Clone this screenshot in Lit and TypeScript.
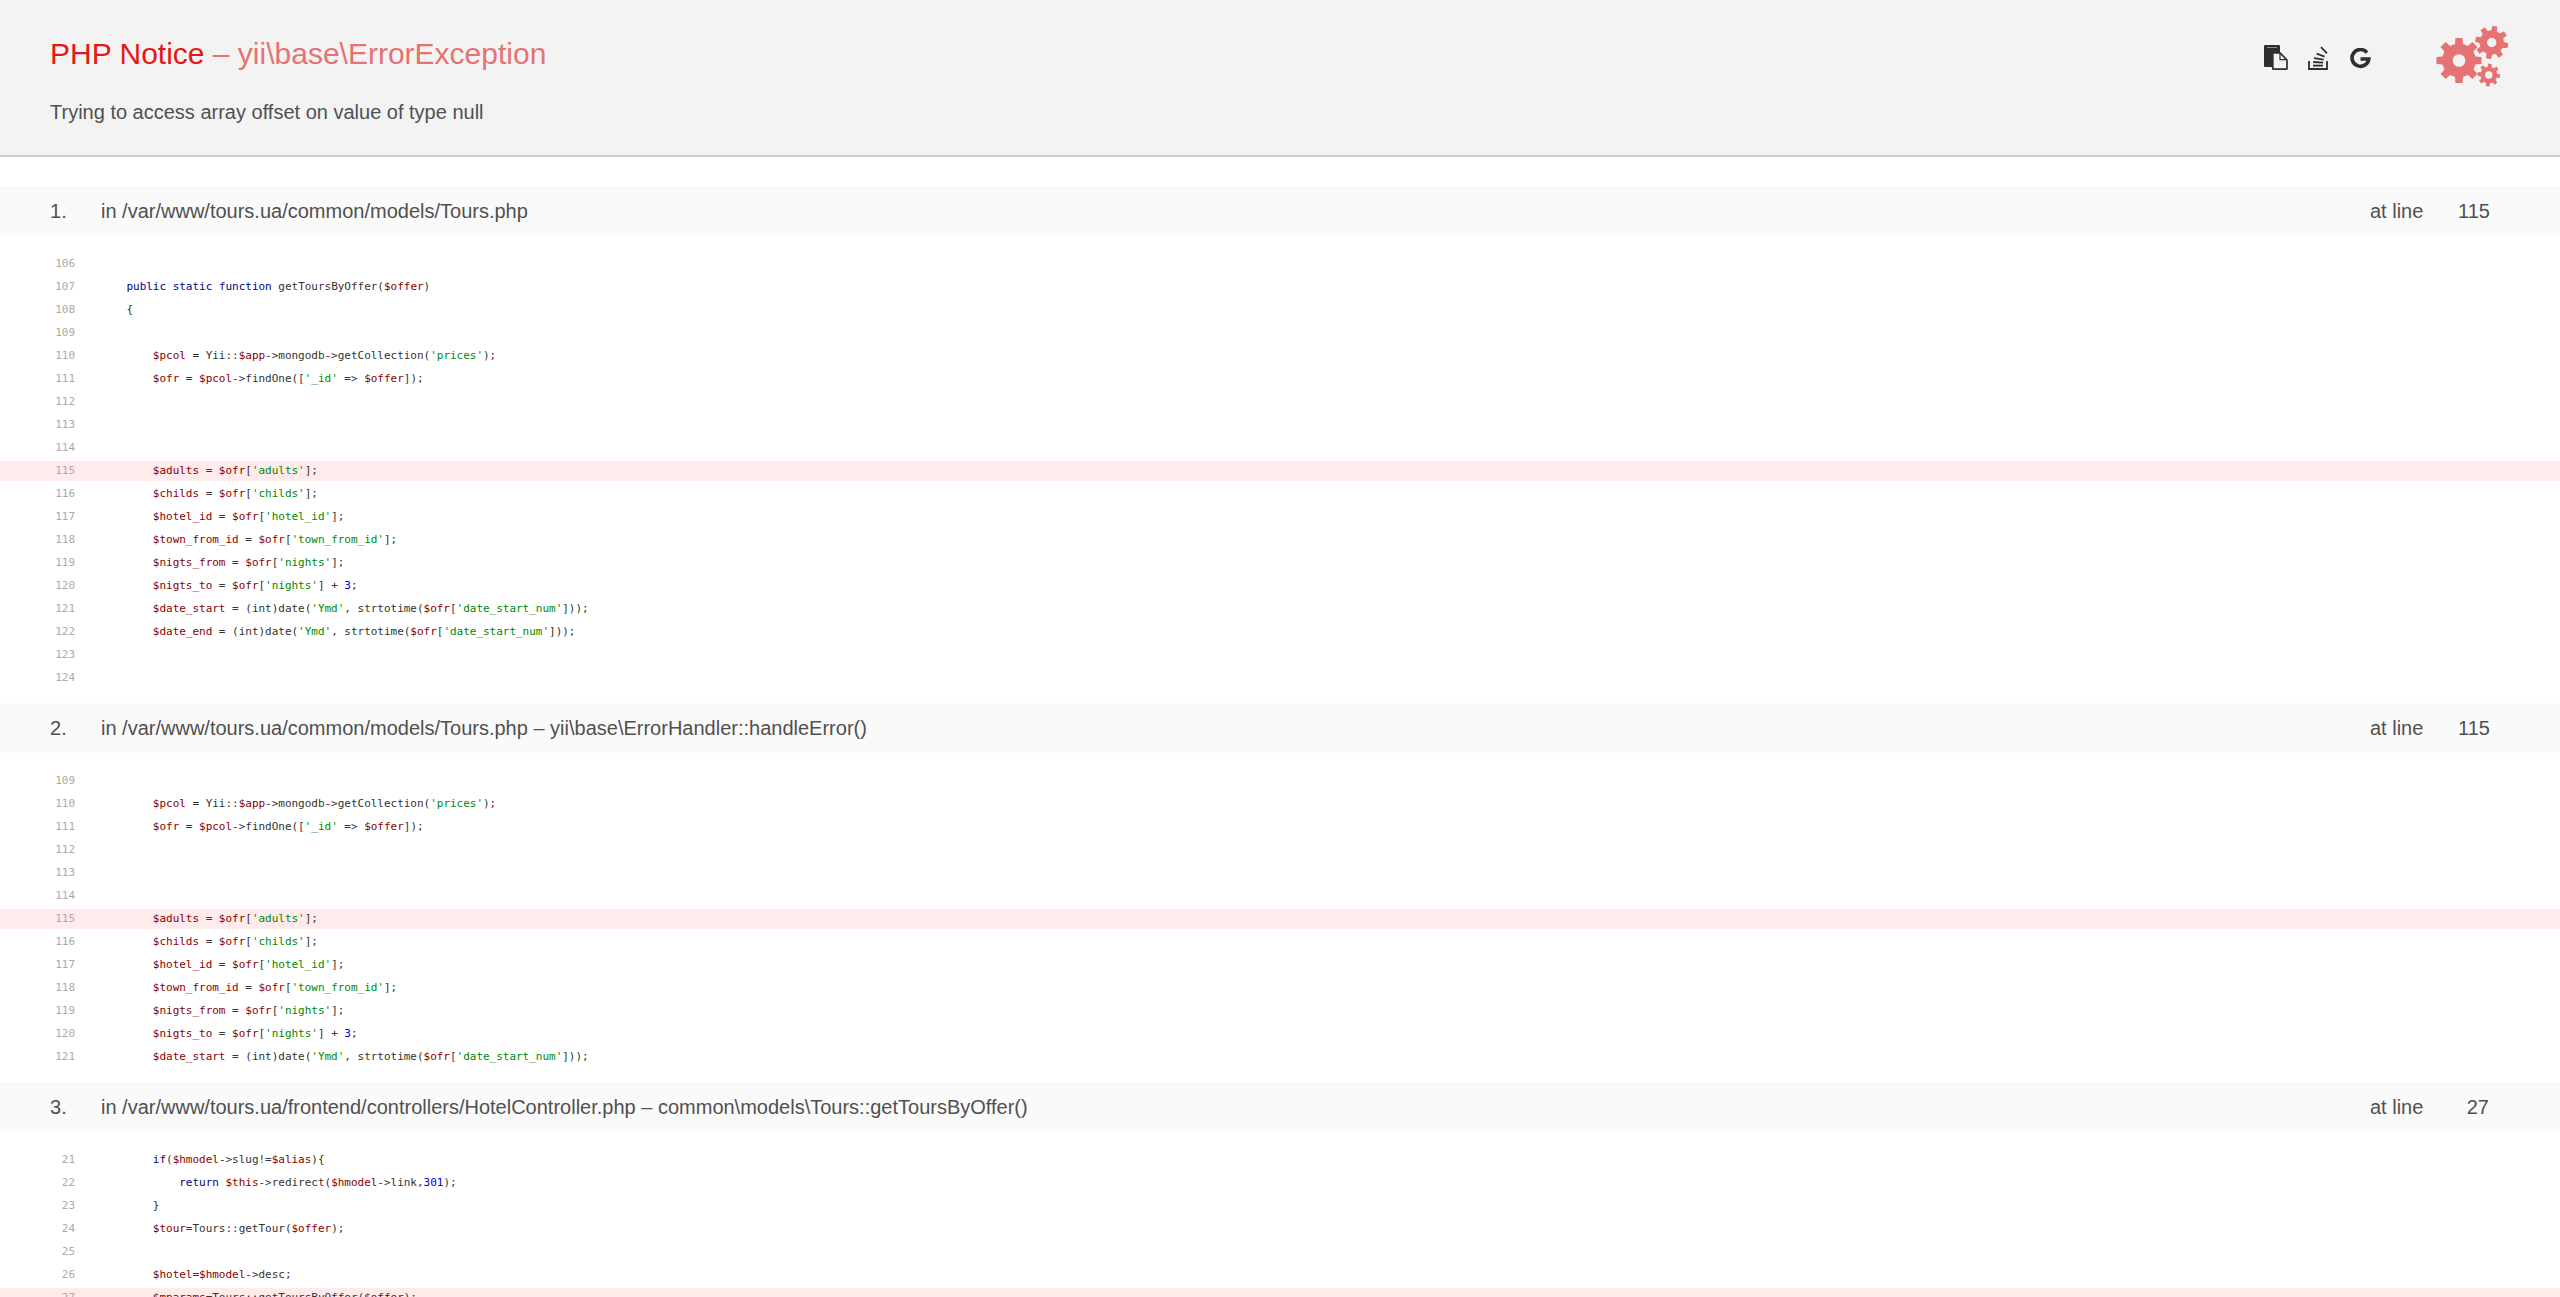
import { LitElement, html, css, svg } from "lit";
import { customElement } from "lit/decorators.js";

type Line = [number, string];
interface Section {
  n: number;
  title: string;
  at: number;
  hl: number;
  lines: Line[];
}

const tail1: Line[] = [
  [110, "        $pcol = Yii::$app->mongodb->getCollection('prices');"],
  [111, "        $ofr = $pcol->findOne(['_id' => $offer]);"],
  [112, ""],
  [113, ""],
  [114, ""],
  [115, "        $adults = $ofr['adults'];"],
  [116, "        $childs = $ofr['childs'];"],
  [117, "        $hotel_id = $ofr['hotel_id'];"],
  [118, "        $town_from_id = $ofr['town_from_id'];"],
  [119, "        $nigts_from = $ofr['nights'];"],
  [120, "        $nigts_to = $ofr['nights'] + 3;"],
  [121, "        $date_start = (int)date('Ymd', strtotime($ofr['date_start_num']));"],
];

const sections: Section[] = [
  {
    n: 1,
    title: "in /var/www/tours.ua/common/models/Tours.php",
    at: 115,
    hl: 115,
    lines: [
      [106, ""],
      [107, "    public static function getToursByOffer($offer)"],
      [108, "    {"],
      [109, ""],
      ...tail1,
      [122, "        $date_end = (int)date('Ymd', strtotime($ofr['date_start_num']));"],
      [123, ""],
      [124, ""],
    ],
  },
  {
    n: 2,
    title: "in /var/www/tours.ua/common/models/Tours.php – yii\\base\\ErrorHandler::handleError()",
    at: 115,
    hl: 115,
    lines: [[109, ""], ...tail1],
  },
  {
    n: 3,
    title: "in /var/www/tours.ua/frontend/controllers/HotelController.php – common\\models\\Tours::getToursByOffer()",
    at: 27,
    hl: 27,
    lines: [
      [21, "        if($hmodel->slug!=$alias){"],
      [22, "            return $this->redirect($hmodel->link,301);"],
      [23, "        }"],
      [24, "        $tour=Tours::getTour($offer);"],
      [25, ""],
      [26, "        $hotel=$hmodel->desc;"],
      [27, "        $mparams=Tours::getToursByOffer($offer);"],
    ],
  },
];

const TOKEN = /('[^']*')|(\$[A-Za-z_]\w*)|\b(public|static|function|if|return)\b|\b(\d+)\b/g;

function highlight(src: string) {
  const out: unknown[] = [];
  let last = 0;
  for (const m of src.matchAll(TOKEN)) {
    const i = m.index ?? 0;
    if (i > last) out.push(src.slice(last, i));
    const cls = m[1] ? "str" : m[2] ? "var" : m[3] ? "kw" : "lit";
    out.push(html`<span class=${cls}>${m[0]}</span>`);
    last = i + m[0].length;
  }
  if (last < src.length) out.push(src.slice(last));
  return out;
}

function gearPath(cx: number, cy: number, outer: number, inner: number, hole: number, teeth: number, start: number) {
  const step = (Math.PI * 2) / teeth;
  const pts: string[] = [];
  for (let t = 0; t < teeth; t++) {
    const a = start + t * step;
    const corners: [number, number][] = [
      [inner, a - step * 0.3],
      [outer, a - step * 0.2],
      [outer, a + step * 0.2],
      [inner, a + step * 0.3],
    ];
    for (const [r, ang] of corners) {
      pts.push(`${(cx + r * Math.cos(ang)).toFixed(2)} ${(cy + r * Math.sin(ang)).toFixed(2)}`);
    }
  }
  const h = `M${cx - hole} ${cy}a${hole} ${hole} 0 1 0 ${hole * 2} 0a${hole} ${hole} 0 1 0 ${-hole * 2} 0z`;
  return `M${pts.join("L")}z${h}`;
}

@customElement("app-root")
export class AppRoot extends LitElement {
  static styles = css`
    :host {
      display: block;
      height: 1297px;
      overflow: hidden;
      background: #fff;
      font-family: "Liberation Sans", Arial, sans-serif;
    }
    .header {
      height: 155px;
      background: #f3f3f3;
      border-bottom: 2px solid #ccc;
      display: flex;
      justify-content: space-between;
      padding: 0 50px;
    }
    h1 {
      margin: 36px 0 0;
      font-size: 30px;
      line-height: 36px;
      font-weight: normal;
      color: #e57373;
    }
    h1 span {
      color: #e51717;
    }
    h2 {
      margin: 28px 0 0;
      font-size: 20px;
      line-height: 24px;
      font-weight: normal;
      color: #505050;
    }
    .tools {
      display: flex;
      align-items: flex-start;
    }
    .copy {
      width: 24px;
      height: 25px;
      margin-top: 45px;
    }
    .so {
      width: 20px;
      height: 24px;
      margin: 46px 0 0 20px;
    }
    .g {
      width: 21px;
      height: 21px;
      margin: 48px 0 0 22px;
    }
    .gears {
      width: 76px;
      height: 64px;
      margin: 25px 0 0 63px;
    }
    .sections {
      padding-top: 29px;
    }
    .bar {
      height: 50px;
      background: #fafafa;
      display: flex;
      align-items: center;
      padding: 0 71px 0 50px;
      font-size: 20px;
      color: #505050;
    }
    .num {
      width: 51px;
      flex: none;
    }
    .title {
      flex: 1;
    }
    .at-line {
      width: 88px;
      flex: none;
    }
    .line-no {
      width: 31px;
      flex: none;
      text-align: right;
      white-space: nowrap;
    }
    .code {
      padding: 18px 0 12px;
      font-family: "DejaVu Sans Mono", monospace;
      font-size: 11px;
      letter-spacing: -0.02px;
      color: #333;
    }
    .row {
      display: flex;
      height: 20px;
      line-height: 20px;
      margin-bottom: 3px;
      white-space: pre;
    }
    .row.hl {
      background: #ffebeb;
    }
    .ln {
      width: 75px;
      flex: none;
      text-align: right;
      color: #aaa;
    }
    .src {
      margin-left: 25px;
    }
    .kw {
      color: #000080;
    }
    .var {
      color: #880000;
    }
    .str {
      color: #008800;
    }
    .lit {
      color: #0000dd;
    }
  `;

  render() {
    return html`
      <div class="header">
        <div>
          <h1><span>PHP Notice</span> – yii\\base\\ErrorException</h1>
          <h2>Trying to access array offset on value of type null</h2>
        </div>
        <div class="tools">
          <svg class="copy" viewBox="0 0 24 25">
            <rect x="0" y="0" width="16" height="22" rx="1" fill="#2e2e2e"></rect>
            <path d="M3 2.5H13" stroke="#8a8a8a" stroke-width="1" fill="none"></path>
            <path d="M8.8 7.8H16L23 15V23.6Q23 24.2 22.4 24.2H9.4Q8.8 24.2 8.8 23.6Z" fill="#f3f3f3" stroke="#2e2e2e" stroke-width="1.7" stroke-linejoin="round"></path>
            <path d="M16 8V14.6H22.6" fill="none" stroke="#2e2e2e" stroke-width="1.2"></path>
          </svg>
          <svg class="so" viewBox="0 0 20 24" fill="none" stroke="#2e2e2e" stroke-width="1.8">
            <path d="M1 15V23H19V15"></path>
            <path d="M5 19.6H15"></path>
            <path d="M5.2 16L15.2 16.6"></path>
            <path d="M6 12.2L15.6 13.6"></path>
            <path d="M8.6 7.6L16.6 10.6"></path>
            <path d="M13 1.2L19 7.4"></path>
          </svg>
          <svg class="g" viewBox="0 0 21 21" fill="none" stroke="#2e2e2e" stroke-width="3.6">
            <path d="M17 4.6A8.4 8.4 0 1 0 18.8 11H10.5"></path>
          </svg>
          <svg class="gears" viewBox="2434 25 76 64">
            ${svg`<path fill="#e57373" fill-rule="evenodd" d=${gearPath(2459, 60.5, 22.8, 17, 6.3, 8, 0)}></path>`}
            ${svg`<path fill="#e57373" fill-rule="evenodd" d=${gearPath(2491.7, 42.5, 16.7, 12.2, 4.7, 8, 0.2)}></path>`}
            ${svg`<path fill="#e57373" fill-rule="evenodd" d=${gearPath(2488.8, 75, 11.4, 8.4, 3.7, 8, 0.1)}></path>`}
          </svg>
        </div>
      </div>
      <div class="sections">
        ${sections.map(
          (s) => html`
            <div class="bar">
              <span class="num">${s.n}.</span>
              <span class="title">${s.title}</span>
              <span class="at-line">at line</span>
              <span class="line-no">${s.at}</span>
            </div>
            <div class="code">
              ${s.lines.map(
                ([n, src]) => html`
                  <div class="row ${n === s.hl ? "hl" : ""}">
                    <span class="ln">${n}</span>
                    <span class="src">${highlight(src)}</span>
                  </div>
                `
              )}
            </div>
          `
        )}
      </div>
    `;
  }
}
